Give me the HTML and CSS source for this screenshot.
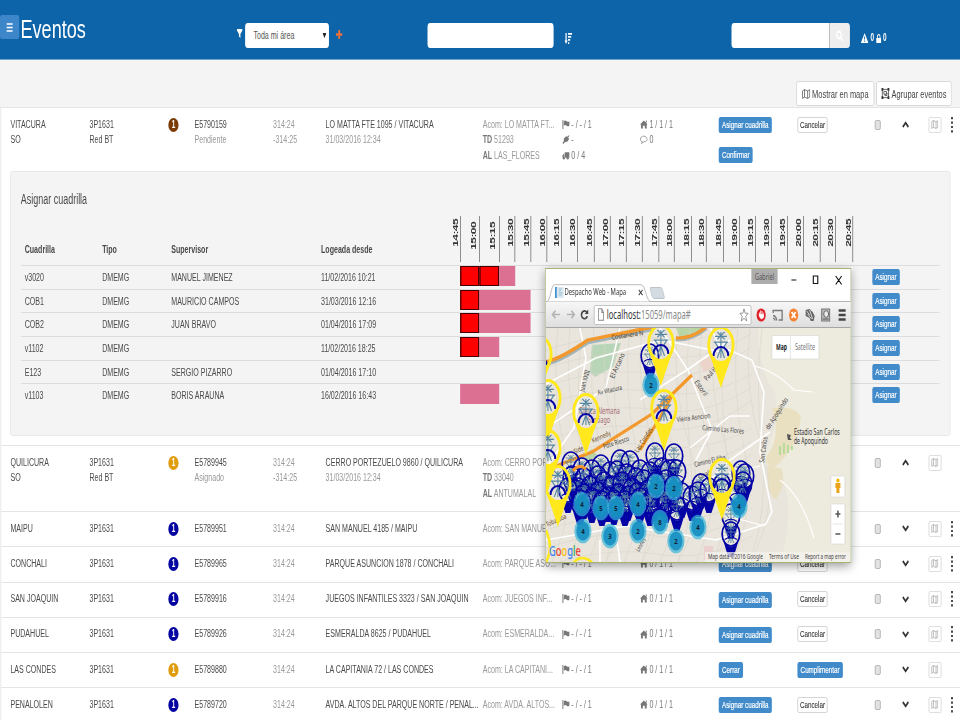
FILE: index.html
```html
<!DOCTYPE html>
<html lang="es">
<head>
<meta charset="utf-8">
<title>Eventos</title>
<link rel="stylesheet" href="styles.css">
</head>
<body>
<div class="frame">
<div class="app">
  <header class="top">
    <button class="menu"><svg width="10" height="9" viewBox="0 0 10 9" preserveAspectRatio="none"><path d="M0 1h10M0 4.5h10M0 8h10" stroke="#fff" stroke-width="1.7"/></svg></button>
    <h1>Eventos</h1>
    <svg class="filter" viewBox="0 0 10 10" preserveAspectRatio="none"><path d="M0 0h10v1.500L6.300 5.500V10L3.700 8.300V5.500L0 1.500z" fill="#fff"/></svg>
    <div class="select"><span>Toda mi área</span><svg width="6" height="5" viewBox="0 0 6 5"><path d="M0 0h6L3 5z" fill="#222"/></svg></div>
    <svg class="plus" viewBox="0 0 10 10" preserveAspectRatio="none"><path d="M5 0v10M0 5h10" stroke="#f0703a" stroke-width="2.800"/></svg>
    <div class="field"></div>
    <svg class="sort" viewBox="0 0 12 12" preserveAspectRatio="none"><path d="M2.500 0v9M5.500 1h6.500M5.500 4.300h5M5.500 7.600h3.500M5.500 11h2" stroke="#fff" stroke-width="1.900"/><path d="M0 8.300h5L2.500 12z" fill="#fff"/></svg>
    <div class="search"><svg width="12" height="12" viewBox="0 0 12 12"><circle cx="5" cy="5" r="3.500" fill="none" stroke="#fff" stroke-width="2"/><path d="M8 8l3 3" stroke="#fff" stroke-width="2"/></svg></div>
    <div class="alerts">
      <svg width="12" height="10" viewBox="0 0 12 10" preserveAspectRatio="none"><path d="M6 0l6 10H0z" fill="#fff"/><path d="M6 3.500v3M6 7.500v1.300" stroke="#0d64a8" stroke-width="1.400"/></svg><b>0</b>
      <svg width="8" height="9" viewBox="0 0 8 9" preserveAspectRatio="none"><path d="M0 4h8v5H0z" fill="#fff"/><path d="M2 4V2.500a2 1.800 0 0 1 4 0V4" fill="none" stroke="#fff" stroke-width="1.300"/></svg><b>0</b>
    </div>
  </header>
  <div class="subbar">
    <button class="tool"><svg width="13" height="10" viewBox="0 0 16 16" preserveAspectRatio="none"><path d="M1 3l4-2 6 2 4-2v12l-4 2-6-2-4 2zM5 1v12M11 3v12" fill="none" stroke="#444" stroke-width="1.200"/></svg>Mostrar en mapa</button>
    <button class="tool group"><svg width="13" height="11" viewBox="0 0 16 16" preserveAspectRatio="none"><path d="M2 2h12v12H2zM5 5h5v4H5zM7 9v2h4V7h-1" fill="none" stroke="#333" stroke-width="1.200"/><path d="M0 0h4v4H0zM12 0h4v4h-4zM0 12h4v4H0zM12 12h4v4h-4z" fill="#333"/></svg>Agrupar eventos</button>
  </div>
  <main class="list" id="list"></main>

  <section class="window">
    <div class="titlebar">
      <div class="tab">
        <svg class="tabshape" viewBox="0 0 103 18" preserveAspectRatio="none"><path d="M0 17.500C3 17 4 1.500 7 .7H94C98 1 99 16.500 103 17.500" fill="#fff" stroke="#aaa" stroke-width=".8"/></svg>
        <svg class="favicon" viewBox="0 0 9 11" preserveAspectRatio="none"><path d="M0 0h2v11H0z" fill="#3f92cf"/><path d="M2 0h7v11H2z" fill="#dbe8f1"/><path d="M4 2h3M4 4h2M4 6h4M4 8h3" stroke="#8eb2cc" stroke-width=".8"/></svg>
        <span>Despacho Web - Mapa</span>
        <svg class="tabclose" viewBox="0 0 8 8" preserveAspectRatio="none"><path d="M1 1l6 6M7 1L1 7" stroke="#333" stroke-width="1.400"/></svg>
      </div>
      <div class="newtab"></div>
      <div class="user">Gabriel</div>
      <svg class="controls" viewBox="0 0 54 12" preserveAspectRatio="none"><path d="M1 6h5M23 2h4.500v7.500h-4.500zM45.500 2l6 8.500M51.500 2l-6 8.500" fill="none" stroke="#111" stroke-width="1.100"/></svg>
    </div>
    <div class="toolbar">
      <svg class="nav" viewBox="0 0 40 14" preserveAspectRatio="none"><path d="M4.500 3L1.500 7l3 4M1.500 7H9M20.500 3l3 4-3 4M23.500 7H16" fill="none" stroke="#b4b4b4" stroke-width="1.700"/><path d="M36 4.500A3 4.200 0 1 0 36.500 9" fill="none" stroke="#444" stroke-width="1.700"/><path d="M37.500 1.500v5H34z" fill="#444"/></svg>
      <div class="url">
        <svg width="10" height="13" viewBox="0 0 8 12" preserveAspectRatio="none"><path d="M1 .7h4L7.300 4v7.300H1zM5 .7V4h2.300" fill="none" stroke="#888"/></svg>
        <span>localhost:<i>15059/mapa#</i></span>
        <svg width="15" height="14" viewBox="0 0 16 16" preserveAspectRatio="none"><path d="M8 1l2 5h5l-4 3.500L12.500 15 8 11.700 3.500 15 5 9.500 1 6h5z" fill="none" stroke="#777"/></svg>
      </div>
      <svg class="ext" viewBox="0 0 96 20" preserveAspectRatio="none">
        <ellipse cx="8.500" cy="10" rx="4.600" ry="6.600" fill="#e02028"/><path d="M6.800 10V7.500M8 9V5.500M9.300 9V6M10.500 10V7.500M6.500 9.500h4.300v3q-2 2.500-3.500 0z" stroke="#fff" stroke-width=".8" fill="#fff"/>
        <path d="M20.500 8V5.500h9v9.500H26M20.500 10.500q3 .5 3.500 5M20.500 13q1.500 .5 1.800 2.500" fill="none" stroke="#777" stroke-width="1.300"/>
        <ellipse cx="41" cy="10" rx="4.600" ry="6.600" fill="#f58132"/><path d="M39 7l4 6M43 7l-4 6" stroke="#fff" stroke-width="1.700"/>
        <path d="M53 5l4-1 3 3 2 4-1 5h-3l-1-3-4-2z" fill="#666"/><path d="M54 6l3 4M57 5l3 9M55 9l4 5" stroke="#ddd" stroke-width=".9"/>
        <rect x="69" y="4" width="8" height="12" fill="#bbb" stroke="#777"/><ellipse cx="73.500" cy="9" rx="2.400" ry="3.300" fill="#eee" stroke="#666"/><path d="M70 14h6" stroke="#555"/>
        <path d="M86 5.500h7M86 10h7M86 14.500h7" stroke="#444" stroke-width="2.400"/>
      </svg>
    </div>
    <svg class="map" id="map" viewBox="546 328 304 234" preserveAspectRatio="none"></svg>
  </section>
</div>
</div>
<script src="app.js"></script>
</body>
</html>
```
FILE: styles.css
```css
* { box-sizing: border-box; }
html, body { margin: 0; background: #fff; }
.frame { width: 960px; height: 720px; overflow: hidden; }
/* the interface is 1500px wide and shown condensed to the viewport width */
.app { position: relative; width: 1500px; height: 720px; overflow: hidden; transform: scale(.64, 1); transform-origin: 0 0; font: 11.050px/15.600px "Liberation Sans", Arial, sans-serif; color: #4a4a4a; white-space: nowrap; }
button { font-family: inherit; margin: 0; padding: 0; }
svg { display: block; flex: none; }

.top { height: 60px; background: #0d64a8; border-bottom: 1px solid #6fa5cf; display: flex; align-items: flex-start; }
.menu { width: 30px; height: 24px; margin-top: 15px; border: 0; border-radius: 3px; background: #3d86c9; display: grid; place-items: center; }
h1 { margin: 14px 0 0 2px; width: 337px; font-size: 25px; line-height: 30px; font-weight: 400; color: #fff; transform: scaleX(1.13); transform-origin: 0 0; }
.filter { width: 9px; height: 9px; margin: 29px 4px 0 1px; }
.select { width: 131px; height: 25px; margin-top: 23px; padding: 0 4px 0 13px; background: #fff; border-radius: 4px; display: flex; align-items: center; justify-content: space-between; color: #555; }
.plus { width: 10px; height: 9px; margin: 30px 0 0 11px; }
.field { width: 197px; height: 25px; margin: 23px 0 0 133px; background: #fff; border-radius: 4px; }
.sort { width: 12px; height: 11px; margin: 33px 0 0 17px; }
.search { width: 185px; height: 25px; margin: 23px 0 0 249px; background: linear-gradient(90deg, #fff 0 153px, #bbb 153px 154px, #eee 154px); border-radius: 4px; display: flex; align-items: center; justify-content: flex-end; padding-right: 10px; }
.alerts { margin: 31px 0 0 17px; display: flex; align-items: center; gap: 3px; color: #fff; font-size: 10px; line-height: 14px; }

.subbar { height: 48px; background: #f4f4f4; border-bottom: 1px solid #e4e4e4; display: flex; justify-content: flex-end; gap: 3px; padding: 21px 13px 0 0; }
.tool { width: 122px; height: 25px; background: #fff; border: 1px solid #d2d2d2; border-radius: 3px; display: flex; align-items: center; justify-content: center; gap: 3px; font-size: 11.700px; color: #444; }
.tool.group { width: 118px; }

.list { border-left: 2px solid #eee; }
.event { height: 35.250px; border-bottom: 1px solid #e4e4e4; padding-top: 8.500px; }
.event.open { height: 66px; }
.event.detail { height: 338px; }
.cells { display: grid; padding-left: 14.300px; grid-template-columns: minmax(0,79fr) minmax(0,79fr) minmax(0,26fr) minmax(0,78.500fr) minmax(0,52.500fr) minmax(0,157fr) minmax(0,79fr) minmax(0,78fr) minmax(0,79fr) minmax(0,78.500fr) minmax(0,77fr) minmax(0,26fr) minmax(0,28fr) minmax(0,20fr) minmax(0,11.500fr); }
.detail .cells { height: 54.500px; }
.soft { color: #999; }
.mid { color: #777; }
.line { display: flex; align-items: center; height: 15.600px; gap: 3px; }
.badge { width: 16px; height: 14px; margin-top: 1px; border-radius: 50%; color: #fff; font-size: 10px; line-height: 14px; text-align: center; font-weight: 700; }
.brown { background: #7a3b05; }
.amber { background: #e09c0c; }
.blue { background: #0404a0; }
.btn { display: block; width: max-content; height: 16px; margin: .5px 0 14px; padding: 0 5px; border: 0; border-radius: 2.500px; background: #428bca; color: #fff; font-size: 9.800px; line-height: 16px; -webkit-text-stroke: .2px #fff; }
.btn.plain { margin-top: 0; padding: 0 3px; background: #fff; border: 1px solid #ccc; line-height: 14px; color: #333; -webkit-text-stroke: .1px #333; }
.check { width: 9px; height: 10px; margin: 3px 0 0 1px; border: 1px solid #aaa; border-radius: 2px; background: #e2e2e2; }
.chev { margin: 4.500px 0 0 2px; }
.mapbtn { width: 20px; height: 16px; border: 1px solid #d6d6d6; border-radius: 2px; display: grid; place-items: center; background: #fff; }
.dots { margin-left: 4px; }

.panel { width: 1469px; height: 265px; margin-left: 13.600px; border: 1px solid #e6e6e6; border-radius: 3px; background: #f4f4f4; padding: 18px 16px 0 16px; }
.panel h2 { margin: 0 0 1px; font-size: 14px; line-height: 18px; font-weight: 400; }
.trow { display: grid; height: 23.650px; width: 1435px; padding-left: 6px; border-top: 1px solid #dcdcdc; align-items: start; line-height: 22px; grid-template-columns: 121px 108px 234px 194px 667px 1fr; }
.trow .btn { margin: 3px 0 0; }
.thead { height: 56px; border: 0; align-items: end; font-weight: 700; line-height: 16px; }
.thead > span { padding-bottom: 8px; }
.times { display: grid; width: 637px; height: 46px; margin-bottom: 3px; grid-template-columns: 15.500fr 19.500fr 19.500fr 15.500fr 16fr 16fr 15fr 16fr 16.500fr 16fr 16fr 16fr 16.500fr 15.500fr 16.800fr 15.200fr 16.800fr 16fr 16fr 16fr 16fr 16fr 17fr 15.200fr 17fr; }
.times span { border-right: 1.500px solid #555; display: flex; justify-content: flex-end; align-items: flex-start; padding: 2.500px 0 0 0; }
.times em { writing-mode: vertical-rl; transform: rotate(180deg); font: 700 12px/14px "Liberation Sans", Arial, sans-serif; letter-spacing: -.6px; color: #333; }
.times span:nth-child(2), .times span:nth-child(3) { padding: 5.500px 3px 0 0; }
.gantt { display: flex; height: 20px; padding-left: 23px; }
.busy { background: #f00; border: 2px solid #400; border-width: 1.500px 2px; }
.planned { background: #db7093; }

.window { position: absolute; left: 852px; top: 268px; width: 478px; height: 295px; background: #fff; border: 1px solid #a5b377; border-width: 1px 1.500px; box-shadow: 0 3px 12px rgba(0,0,0,.4); font-family: "Noto Sans", "Open Sans", sans-serif; display: flex; flex-direction: column; }
.titlebar { height: 33px; display: flex; align-items: flex-end; border-bottom: 1px solid #b5b5b5; }
.tab { position: relative; width: 161px; height: 18px; margin-left: 2px; padding-left: 12px; display: flex; align-items: center; font-size: 9.200px; color: #333; }
.tabshape { position: absolute; left: 0; top: 1px; width: 161px; height: 18px; }
.favicon { position: relative; width: 14px; height: 11px; }
.tab span { position: relative; margin-left: 1px; width: 109px; }
.tabclose { position: relative; width: 8px; height: 7px; margin-left: 6px; }
.newtab { width: 20px; height: 12px; margin: 0 0 2px 1px; background: #d4dbe2; border: 1px solid #bbc2c8; border-radius: 3px; transform: skewX(22deg); }
.user { align-self: flex-start; width: 41px; height: 15px; margin-left: 137px; background: #adadad; color: #555; font-size: 9px; line-height: 15px; text-align: center; }
.controls { align-self: flex-start; width: 84px; height: 12px; margin: 5px 0 0 20px; }
.toolbar { height: 26px; background: linear-gradient(#f7f7f7, #dedede); border-bottom: 1px solid #a6a6a6; display: flex; align-items: center; }
.nav { width: 62px; height: 13px; margin: 0 5px 0 8px; }
.url { width: 246px; height: 20px; border: 1px solid #b9b9b9; border-radius: 2px; background: #fff; display: flex; align-items: center; gap: 4px; padding: 0 3px 0 5px; }
.url span { flex: 1; font-size: 11.900px; color: #333; }
.url i { font-style: normal; color: #888; }
.ext { width: 150px; height: 20px; margin-left: 2px; }
.map { width: 475px; height: 234px; background: #e8e4db; }
.map text { font-family: "Noto Sans", sans-serif; }
```
FILE: app.js
```js
const P = {
  flag: '<path d="M1 0h2v16H1zM4 2q3-2 6 0t6 0v8q-3 2-6 0t-6 0z"/>',
  home: '<path d="M8 1L0 8h2v7h4v-5h4v5h4V8h2zM12 1h2v4h-2z"/>',
  plug: '<path d="M15 0l1 1-3 4 2 2-4 5-5 1-3 3-2-2 3-3 0-5 5-4 2 1z"/>',
  comment: '<path d="M8 2C4 2 1 4 1 7.500S4 12 5 12l-2 3 5-3c5 0 7-2 7-4.500S12 2 8 2z" fill="none" stroke="#888" stroke-width="1.500"/>',
  truck: '<path d="M6 2h10v10H6zM5 4L1 8v4h4z"/><circle cx="4" cy="13" r="2.200"/><circle cx="12" cy="13" r="2.200"/>',
  map: '<path d="M1 3l4-2 6 2 4-2v12l-4 2-6-2-4 2zM5 1v12M11 3v12" fill="none" stroke="#999" stroke-width="1.300"/>'
};
const ico = (n, w, h) => `<svg width="${w}" height="${h}" viewBox="0 0 16 16" preserveAspectRatio="none" fill="#777">${P[n]}</svg>`;
const line = (i, t) => `<div class="line mid">${i ? ico(i, 12, 9) : ''}${t}</div>`;

const events = [
  { c: 'VITACURA', z: 'SO', col: 'brown', id: 'E5790159', st: 'Pendiente', a: 'LO MATTA FTE 1095 / VITACURA', ac: 'LO MATTA FT...', td: '51293', al: 'LAS_FLORES', h: '1', full: 1, detail: 1, b: ['Asignar cuadrilla', 'Confirmar'], k: 'Cancelar', dots: 1 },
  { c: 'QUILICURA', z: 'SO', col: 'amber', id: 'E5789945', st: 'Asignado', a: 'CERRO PORTEZUELO 9860 / QUILICURA', ac: 'CERRO PORT...', td: '33040', al: 'ANTUMALAL', h: '0', full: 1, b: [], dots: 0 },
  { c: 'MAIPU', col: 'blue', id: 'E5789951', a: 'SAN MANUEL 4185 / MAIPU', ac: 'SAN MANUEL...', h: '0', b: [], dots: 1 },
  { c: 'CONCHALI', col: 'blue', id: 'E5789965', a: 'PARQUE ASUNCION 1878 / CONCHALI', ac: 'PARQUE ASU...', h: '0', b: ['Asignar cuadrilla'], k: 'Cancelar', dots: 1 },
  { c: 'SAN JOAQUIN', col: 'blue', id: 'E5789916', a: 'JUEGOS INFANTILES 3323 / SAN JOAQUIN', ac: 'JUEGOS INF...', h: '0', b: ['Asignar cuadrilla'], k: 'Cancelar', dots: 1 },
  { c: 'PUDAHUEL', col: 'blue', id: 'E5789926', a: 'ESMERALDA 8625 / PUDAHUEL', ac: 'ESMERALDA...', h: '0', b: ['Asignar cuadrilla'], k: 'Cancelar', dots: 1 },
  { c: 'LAS CONDES', col: 'amber', id: 'E5789880', a: 'LA CAPITANIA 72 / LAS CONDES', ac: 'LA CAPITANI...', h: '0', b: ['Cerrar'], k: 'Cumplimentar', dots: 0 },
  { c: 'PENALOLEN', col: 'blue', id: 'E5789720', a: 'AVDA. ALTOS DEL PARQUE NORTE / PENAL...', ac: 'AVDA. ALTOS...', h: '0', b: ['Asignar cuadrilla'], k: 'Cancelar', dots: 1 }
];

// bar lengths are in timeline units
const crews = [
  ['v3020', 'MANUEL JIMENEZ', '11/02/2016 10:21', [19.5, 20], 15.5],
  ['COB1', 'MAURICIO CAMPOS', '31/03/2016 12:16', [19.5], 51],
  ['COB2', 'JUAN BRAVO', '01/04/2016 17:09', [19.5], 51],
  ['v1102', '', '11/02/2016 18:25', [19.5], 20],
  ['E123', 'SERGIO PIZARRO', '01/04/2016 17:10', [], 0],
  ['v1103', 'BORIS ARAUNA', '16/02/2016 16:43', [], 39.5]
];

const times = [];
for (let m = 885; m <= 1245; m += 15) times.push(`${Math.floor(m / 60)}:${String(m % 60).padStart(2, '0')}`);
const bar = (k, w) => w ? `<div class="${k}" style="width:${w * 1.5625}px"></div>` : '';

const panel = `<div class="panel"><h2>Asignar cuadrilla</h2>
<div class="trow thead"><span>Cuadrilla</span><span>Tipo</span><span>Supervisor</span><span>Logeada desde</span><div class="times">${times.map(t => `<span><em>${t}</em></span>`).join('')}</div></div>
${crews.map(r => `<div class="trow"><span>${r[0]}</span><span>DMEMG</span><span>${r[1]}</span><span>${r[2]}</span><div class="gantt">${r[3].map(w => bar('busy', w)).join('')}${bar('planned', r[4])}</div><div><button class="btn">Asignar</button></div></div>`).join('')}</div>`;

const more = (e, t) => e.full ? t : '';
document.getElementById('list').innerHTML = events.map(e => `<div class="event ${e.full ? 'open' : ''} ${e.detail ? 'detail' : ''}"><div class="cells">
<div>${e.c}<br>${more(e, e.z)}</div>
<div>3P1631<br>${more(e, 'Red BT')}</div>
<div><div class="badge ${e.col}">1</div></div>
<div>${e.id}<br><span class="soft">${more(e, e.st)}</span></div>
<div class="soft">314:24<br>${more(e, '-314:25')}</div>
<div>${e.a}<br><span class="soft">${more(e, '31/03/2016 12:34')}</span></div>
<div class="soft">Acom: ${e.ac}${more(e, `<br><b class="mid">TD</b> ${e.td}<br><b class="mid">AL</b> ${e.al}`)}</div>
<div>${line('flag', '- / - / 1')}${more(e, line('plug', '-') + line('truck', '0 / 4'))}</div>
<div>${line('home', e.h + ' / 1 / 1')}${more(e, line('comment', '0'))}</div>
<div>${e.b.map(t => `<button class="btn">${t}</button>`).join('')}</div>
<div>${e.k ? `<button class="btn ${e.k === 'Cancelar' ? 'plain' : ''}">${e.k}</button>` : ''}</div>
<div><div class="check"></div></div>
<div><svg class="chev" width="12" height="7" viewBox="0 0 11 7" preserveAspectRatio="none"><path d="${e.full ? 'M1.500 6l4-4.200 4 4.200' : 'M1.500 1l4 4.200 4-4.200'}" fill="none" stroke="#333" stroke-width="2.200"/></svg></div>
<div><div class="mapbtn">${ico('map', 11, 9)}</div></div>
<div>${e.dots ? '<svg class="dots" width="3" height="16" viewBox="0 0 4 18" preserveAspectRatio="none"><path d="M0 0h4v2.500H0zM0 5h4v2.500H0zM0 10h4v2.500H0zM0 15h4v2.500H0z" fill="#444"/></svg>' : ''}</div>
</div>${e.detail ? panel : ''}</div>`).join('');

// ---- map ----
const path = (d, s, w, f) => `<path d="${d}" stroke="${s}" stroke-width="${w}" fill="${f || 'none'}"/>`;
const label = (x, y, r, len, t, c, s) => `<text transform="translate(${x} ${y}) rotate(${r})" font-size="${s || 7}" fill="${c || '#444'}" textLength="${len}" lengthAdjust="spacingAndGlyphs">${t}</text>`;
const tower = '<path d="M0-9V9M-5-6H5M-6-2H6M-3-9L3-4M3-9L-3-4M-5-2l3 4M5-2L2 2M-3 9L0 2l3 7" fill="none" stroke="#5585a2" stroke-width=".9"/>';
const blue = (x, y) => `<g transform="translate(${x} ${y})">${tower}<ellipse rx="8.800" ry="12" fill="none" stroke="#0505a5" stroke-width="1.700"/><path d="M-6 5.500Q0 1 6 5.500" fill="none" stroke="#0505a5" stroke-width="1.200"/><path d="M-7.500 7Q-5 16 -2.500 23h5Q5 16 7.500 7 0 18-7.500 7z" fill="#0505a5"/></g>`;
const yellow = (x, y) => `<g transform="translate(${x} ${y})"><g transform="scale(1.200 1.450)">${tower}</g><path d="M-7.500 11a7.500 9 0 0 1 15 0" fill="none" stroke="#0505a5" stroke-width="2.200"/><path d="M-12 8Q-5 27 0 43 5 27 12 8 0 26-12 8z" fill="#ffe81c"/><ellipse rx="12.200" ry="17.500" fill="none" stroke="#ffe81c" stroke-width="2.800"/></g>`;
const cluster = (x, y, n) => `<g transform="translate(${x} ${y})"><ellipse rx="8.600" ry="12.300" fill="#35b4da" opacity=".7"/><ellipse rx="6.600" ry="9.600" fill="#158fc0" opacity=".9"/><text y="2.800" font-size="7.500" font-weight="700" text-anchor="middle" fill="#123" transform="scale(.8 1)">${n}</text></g>`;

let m = '';
m += '<rect x="546" y="328" width="304" height="234" fill="#e9e5dc"/>';
m += '<path d="M758 328h92v234H780q10-30 8-60t-28-40q22-38 15-70-16-20-17-64z" fill="#edeade"/>';
m += '<path d="M592 345l29-2-8 24-18 10-5-5z" fill="#b9d5b7"/><path d="M676 328h28q-10 12-24 10z" fill="#b9d5a5"/><path d="M592 449l5 6-8 8-6-5z" fill="#b9d5a5"/>';
m += '<path d="M772 408q24-3 29 9-3 30-26 50-10-2-9-10 16-18 6-49z" fill="#e9e0c2"/><path d="M768 465l14 4q4 18-6 30-10-4-8-34z" fill="#e9e0c2"/>';
m += '<path d="M780 446v9M784 443v11M788 445v8M792 446v4" stroke="#b8db98" stroke-width="2"/>';
m += '<path d="M699 362l15-8 4 12-14 6z" fill="#ecd4ca"/><path d="M704 546h9v14h-9z" fill="#ecd0cf"/>';
for (let i = 0; i < 19; i++) m += path(`M${546 + i * 12} 328q-7 60 ${i % 3 * 6} 120t-12 114`, '#d9d5cb', .6);
for (let i = 0; i < 13; i++) m += path(`M546 ${350 + i * 18}q60-20 110-12t96-${18 + i % 3 * 5}`, '#d9d5cb', .6);
m += path('M546 384l50-26 66-18 60 12M580 328l6 30-12 70-28 40M620 328l-14 60-60 40M640 400l50-32 40-28M660 328l28 42 24 60-16 30M690 448l40-32 20 0M546 540l80-14 90 14 50-16 6-12-12-60 4-60-12-32-32-14-18-34M600 540v22M612 500l8 62M690 500l40-40 40-28', '#fff', 1.600);
m += path('M754 366q20 4 40 24l18 2M700 480l60-14M735 518l30 8M780 480q22 16 34 58', '#fff', 1.100);
m += path('M546 364q16-4 42-22l64-13M676 339q16 1 30-11', '#9fb4bb', 4.500);
m += path('M546 362q16-4 42-22l64-13M676 338q16 1 30-11', '#f2982c', 3.400);
m += path('M546 470l46-18 60-38 40-39M640 450l20-32 12-22', '#f2982c', 3.200);
m += label(612, 340, -9, 32, 'Costanera N', '#5d3b16') + label(614, 379, -66, 27, 'El Arcano') + label(598, 395, -12, 25, 'Av Vitacura') + label(584, 392, -74, 22, 'Juan XXIII');
m += label(593, 443, -24, 20, 'Kennedy', '#6b4a22') + label(575, 454, -24, 10, 'Side', '#6b4a22') + label(604, 449, -18, 27, 'Pdte Riesco') + label(638, 453, -57, 28, 'Las Condes', '#6b4a22') + label(677, 422, -7, 34, 'Vieira Asncion');
m += label(579, 414, 0, 41, 'Clinica Alemana', '#a46570', 8) + label(588, 423, 0, 22, 'Santiago', '#a46570', 8) + label(707, 381, -48, 15, 'Paul H') + label(694, 382, 55, 18, 'Estoril') + label(702, 430, 5, 42, 'Camino Las Flores') + label(695, 467, -14, 32, 'Camino El Alba') + label(699, 479, -18, 12, 'Gral');
m += label(764, 463, -82, 26, 'San Carlos') + label(769, 430, -57, 36, 'de Apoquindo') + label(547, 527, -24, 22, 'Tobalaba', '#6b4a22') + label(639, 552, -60, 14, 'Leones', '#444', 6);
m += label(794, 435, 0, 46, 'Estadio San Carlos', '#333', 8) + label(794, 443.500, 0, 34, 'de Apoquindo', '#333', 8);
m += '<path d="M787 434l4 1-1 3 2 2h-4z" fill="#555"/>';

m += yellow(721, 345) + yellow(539, 354) + yellow(548, 398) + blue(650, 356) + yellow(661, 343) + cluster(651, 385, '2') + yellow(586, 412) + yellow(664, 408);
m += yellow(548, 448);
const blues = [[571,464],[582,470],[601,467],[620,462],[630,463],[655,455],[674,456],[592,472],[610,474],[640,472],[662,470],[572,478],[584,480],[598,478],[617,473],[627,476],[636,480],[650,474],[669,472],[578,490],[590,488],[604,484],[612,488],[622,484],[632,490],[644,482],[656,484],[666,482],[677,472],[568,490],[584,496],[598,494],[608,499],[618,496],[628,498],[638,494],[648,492],[654,498],[662,494],[673,488],[580,502],[592,500],[602,503],[614,502],[625,503],[640,500],[650,503],[666,500],[682,495],[692,498],[701,486],[698,494],[709,490],[722,486],[741,473],[745,476],[737,490],[743,484],[677,508],[731,516],[731,534]];
m += blues.map(p => blue(p[0], p[1])).join('');
m += path('M573 471q6-8 13-2', '#f2982c', 3);
m += yellow(558, 484) + yellow(722, 477);
m += [[656,486,2],[674,488,2],[582,504,4],[601,508,5],[616,508,5],[638,504,4],[739,506,4],[583,531,4],[610,536,3],[638,531,2],[660,522,8],[698,527,4],[676,541,2]].map(c => cluster(...c)).join('');
m += '<path d="M546 530q8 18 0 32M574 562q8-8 18 0" fill="none" stroke="#ffe81c" stroke-width="2.500"/>';
m += '<text x="549" y="556" font-size="13.500" font-weight="500" textLength="32" lengthAdjust="spacingAndGlyphs"><tspan fill="#4285f4">G</tspan><tspan fill="#ea4335">o</tspan><tspan fill="#fbbc05">o</tspan><tspan fill="#4285f4">g</tspan><tspan fill="#34a853">l</tspan><tspan fill="#ea4335">e</tspan></text>';
m += '<rect x="705" y="552" width="145" height="10" fill="#f4f2ee" opacity=".75"/>' + label(708, 559, 0, 55, 'Map data ©2016 Google', '#444', 7) + label(769, 559, 0, 30, 'Terms of Use', '#444', 7) + label(805, 559, 0, 41, 'Report a map error', '#444', 7);
m += '<g fill="#fff" stroke="#ccc" stroke-width=".5"><rect x="772" y="335.500" width="47" height="23.500" rx="1"/><path d="M790.500 336v23"/><rect x="831" y="476" width="14" height="21" rx="1"/><rect x="831" y="504" width="14" height="40" rx="1"/><path d="M833 524h10"/></g>';
m += '<text x="776" y="349.500" font-size="8" font-weight="700" fill="#222" textLength="11" lengthAdjust="spacingAndGlyphs">Map</text>' + label(795, 349.500, 0, 20, 'Satellite', '#777', 8);
m += '<ellipse cx="838" cy="480.500" rx="1.600" ry="2" fill="#f4b400"/><path d="M835.500 483h5v5h-1v5h-3v-5h-1z" fill="#e9a21a"/>';
m += path('M835.500 514h5M838 510.500v7M835.500 534h5', '#555', 1.500);
document.getElementById('map').innerHTML = m;
```
